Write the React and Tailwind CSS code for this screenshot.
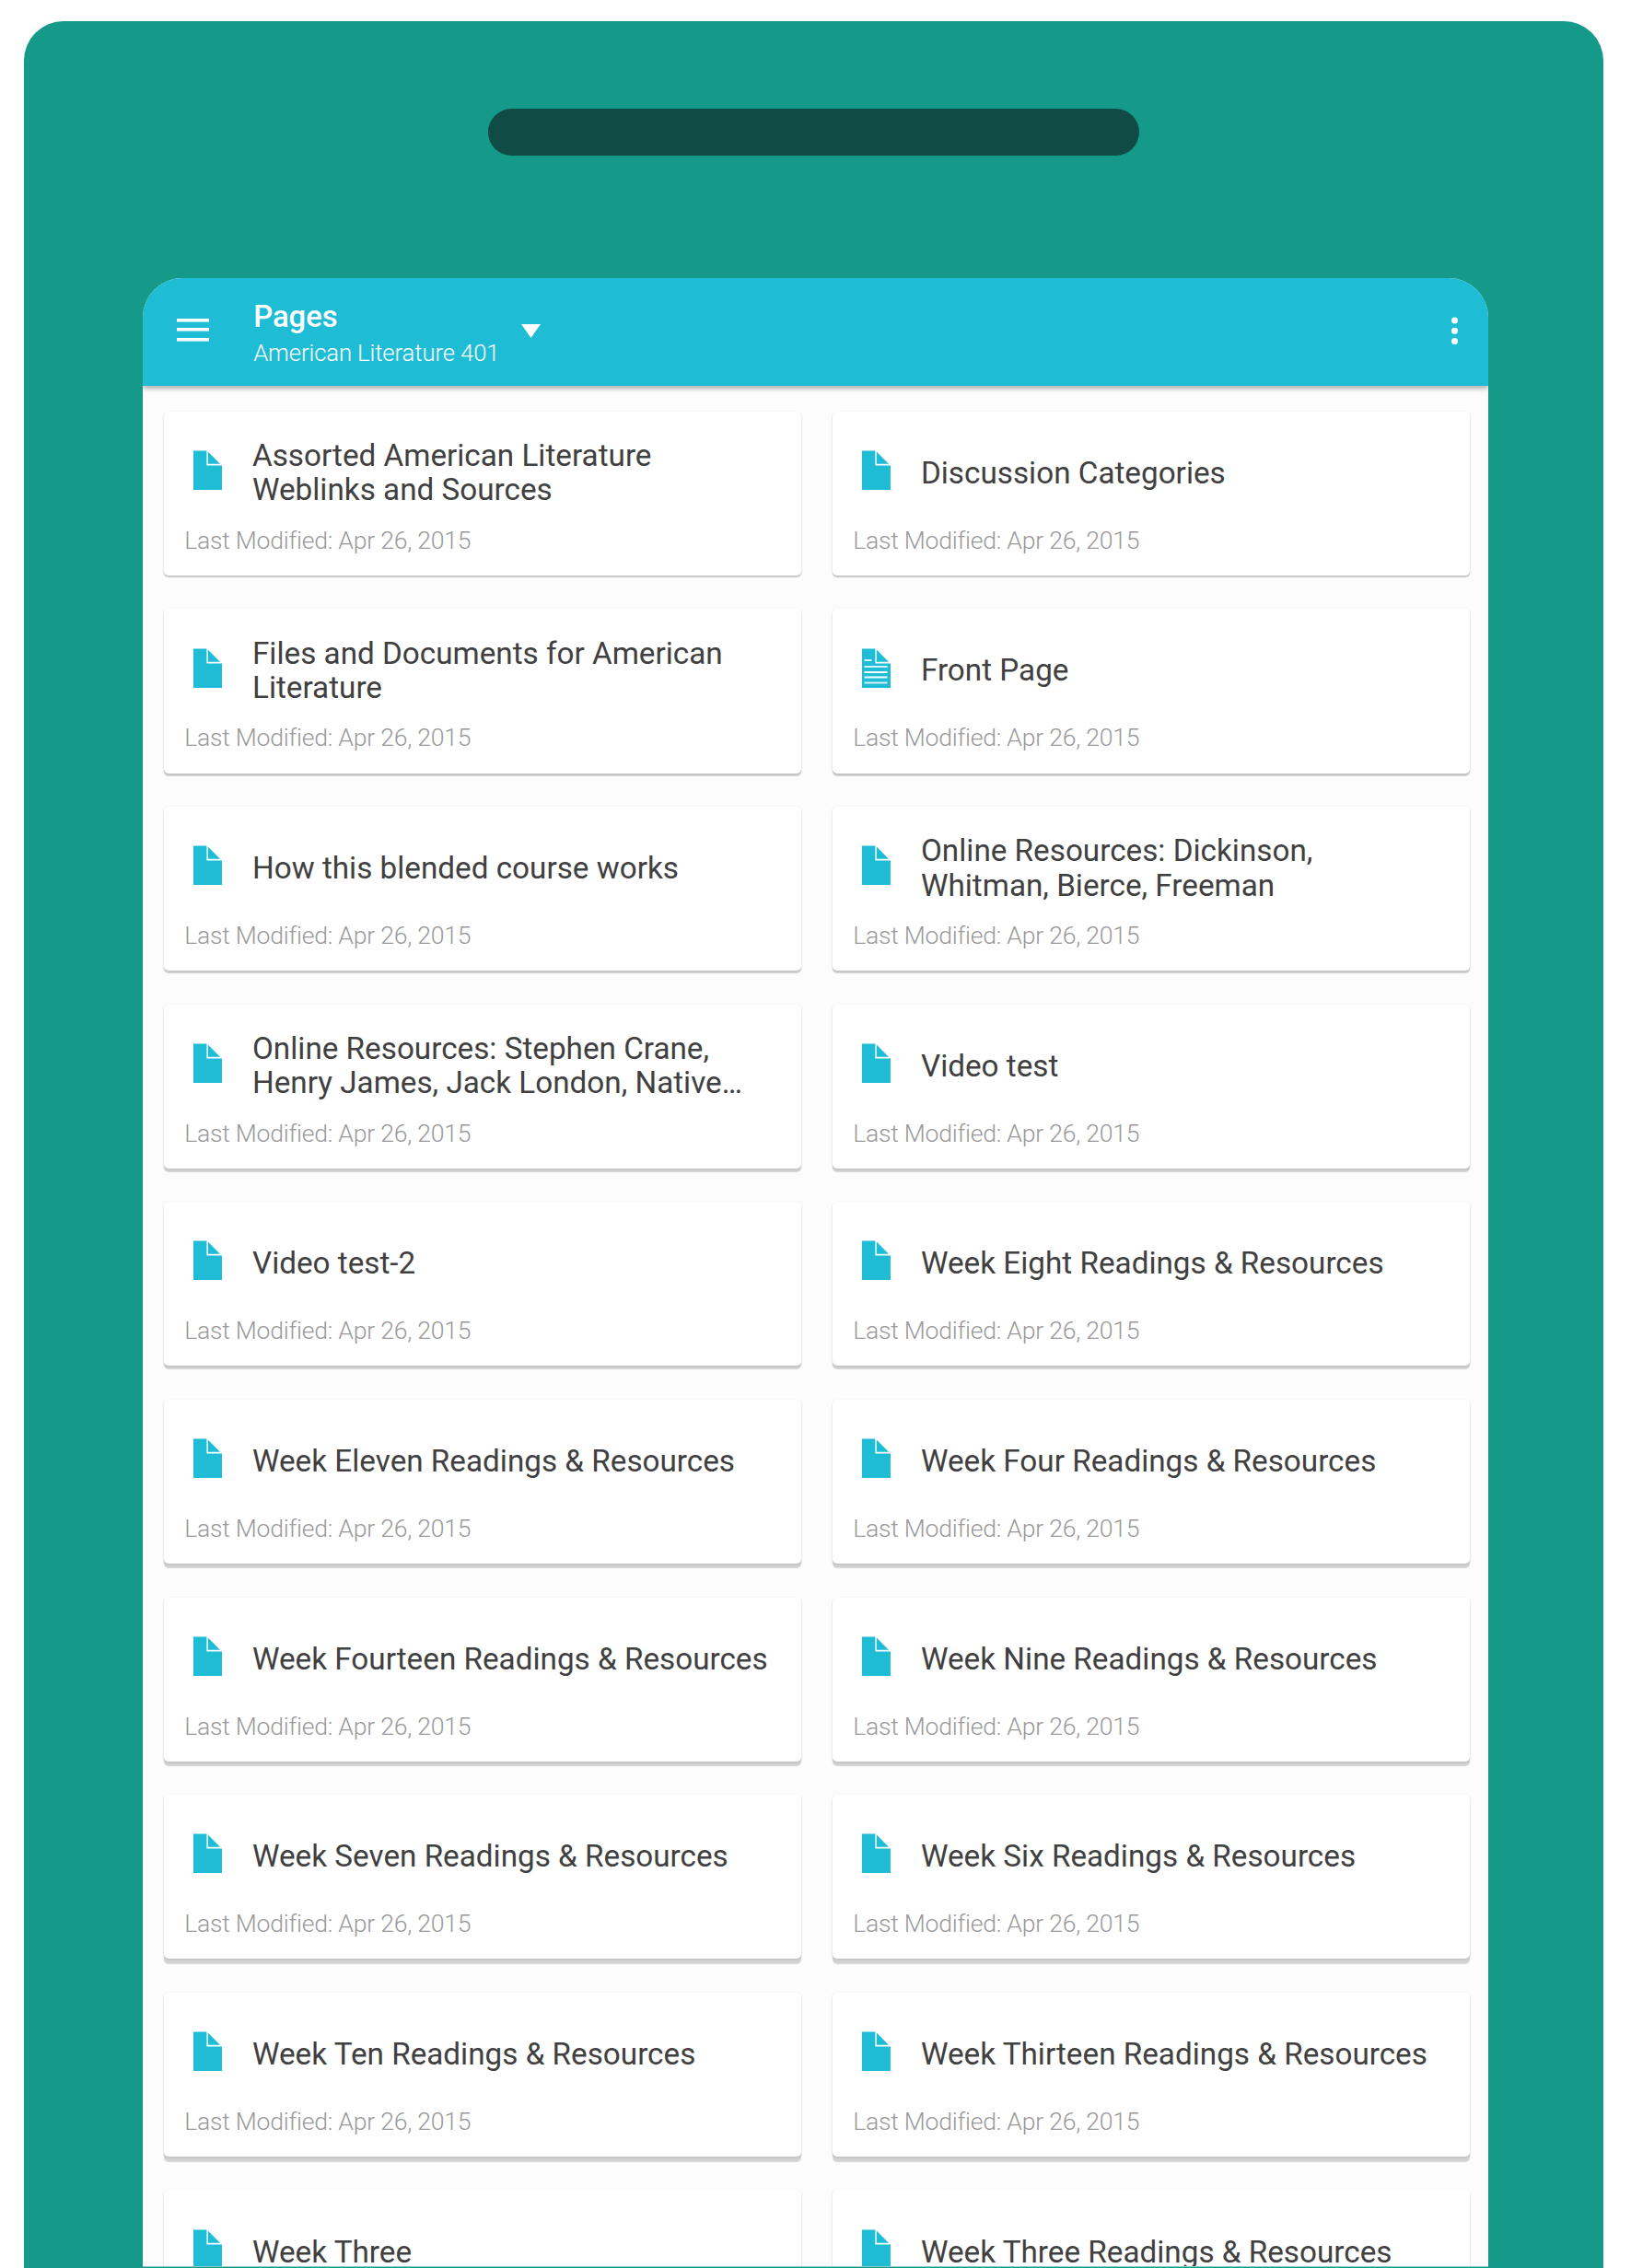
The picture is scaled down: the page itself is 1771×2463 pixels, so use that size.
const pages = [
  ["Assorted American Literature", "Weblinks and Sources"],
  ["Discussion Categories"],
  ["Files and Documents for American", "Literature"],
  ["Front Page"],
  ["How this blended course works"],
  ["Online Resources: Dickinson,", "Whitman, Bierce, Freeman"],
  ["Online Resources: Stephen Crane,", "Henry James, Jack London, Native…"],
  ["Video test"],
  ["Video test-2"],
  ["Week Eight Readings & Resources"],
  ["Week Eleven Readings & Resources"],
  ["Week Four Readings & Resources"],
  ["Week Fourteen Readings & Resources"],
  ["Week Nine Readings & Resources"],
  ["Week Seven Readings & Resources"],
  ["Week Six Readings & Resources"],
  ["Week Ten Readings & Resources"],
  ["Week Thirteen Readings & Resources"],
  ["Week Three"],
  ["Week Three Readings & Resources"],
];

function PageIcon({ lined }) {
  return (
    <svg className="h-[43px] w-[31px] shrink-0" viewBox="0 0 31 43" fill="#1fbcd6">
      <path d="M0 .5H14.4V16.4H31V43H0Z" />
      <path d="M15.8 1.5 29 14.8H15.8Z" />
      {lined && (
        <g fill="#fff">
          <rect x="2.5" y="12" width="8" height="2" opacity=".8" />
          <rect x="2.5" y="19" width="25" height="2" opacity=".8" />
          <rect x="2.5" y="25" width="25" height="2" />
          <rect x="2.5" y="30.5" width="25" height="2" />
          <rect x="2.5" y="36.5" width="25" height="2" opacity=".8" />
        </g>
      )}
    </svg>
  );
}

function PageCard({ lines, lined, row }) {
  return (
    <article
      className="h-[178.3px] rounded-[5px] bg-white"
      style={{
        boxShadow: `0 ${2 + row * 0.5}px 1px 0 rgba(0,0,0,.16), 0 1px 2px 1px rgba(0,0,0,.07)`,
      }}
    >
      <div className="flex h-[133px] items-center pl-8">
        <div className="-mt-[5.4px] flex">
          <PageIcon lined={lined} />
        </div>
        <h2 className="ml-[33px] mt-[0.8px] whitespace-nowrap text-[33.25px] leading-[37.6px] text-[#404040]">
          {lines.map((line) => (
            <span key={line} className="block">{line}</span>
          ))}
        </h2>
      </div>
      <p className="-mt-px pl-[22.3px] text-[26.6px] font-light leading-[16px] tracking-[-0.25px] text-[#999]">
        Last Modified: Apr 26, 2015
      </p>
    </article>
  );
}

export default function App() {
  return (
    <div className="h-[2463px] w-[1771px] overflow-hidden bg-white pl-[26.4px] pt-[23.4px] font-['Roboto',sans-serif]">
      <div className="flex h-[2500px] w-[1714.8px] flex-col rounded-t-[43px] bg-[#159989] pl-[128.2px] pt-[94.6px]">
        <div className="ml-[375px] h-[50.6px] w-[707.6px] shrink-0 rounded-full bg-[#114b45]" />
        <main className="mt-[133.8px] h-[2159.8px] w-[1461.6px] shrink-0 overflow-hidden rounded-t-[43px] border-b border-[#8ccbc3] bg-[#fcfcfc]">
          <header className="relative flex h-[116.6px] items-start bg-[#1fbcd6] text-white shadow-[0_3px_5px_rgba(0,0,0,0.3)]">
            <svg className="ml-[37px] mt-[43.6px] h-[25px] w-[35px]" viewBox="0 0 35 25" fill="#fff">
              <rect y="0" width="35" height="3.6" />
              <rect y="10" width="35" height="3.6" />
              <rect y="21" width="35" height="3.6" />
            </svg>
            <div className="ml-[48.6px] mt-[21.6px] whitespace-nowrap">
              <h1 className="text-[32.8px] font-medium leading-[40px]">Pages</h1>
              <p className="text-[25.7px] font-light leading-[38px] tracking-[-0.11px]">American Literature 401</p>
            </div>
            <svg className="ml-[24px] mt-[49.6px] h-[15px] w-[21px]" viewBox="0 0 21 15" fill="#fff">
              <path d="M0 0H21L10.5 15Z" />
            </svg>
            <svg className="ml-auto mr-[33px] mt-[41.6px] h-[31px] w-[7px]" viewBox="0 0 7 31" fill="#fff">
              <circle cx="3.5" cy="4" r="3.5" />
              <circle cx="3.5" cy="15.2" r="3.5" />
              <circle cx="3.5" cy="26.4" r="3.5" />
            </svg>
          </header>
          <section className="grid grid-cols-[692.5px_692px] gap-x-[33.5px] gap-y-[36.37px] pl-[23.4px] pt-[27.6px]">
            {pages.map((lines, i) => (
              <PageCard key={lines[0]} lines={lines} lined={i === 3} row={Math.floor(i / 2)} />
            ))}
          </section>
        </main>
      </div>
    </div>
  );
}
